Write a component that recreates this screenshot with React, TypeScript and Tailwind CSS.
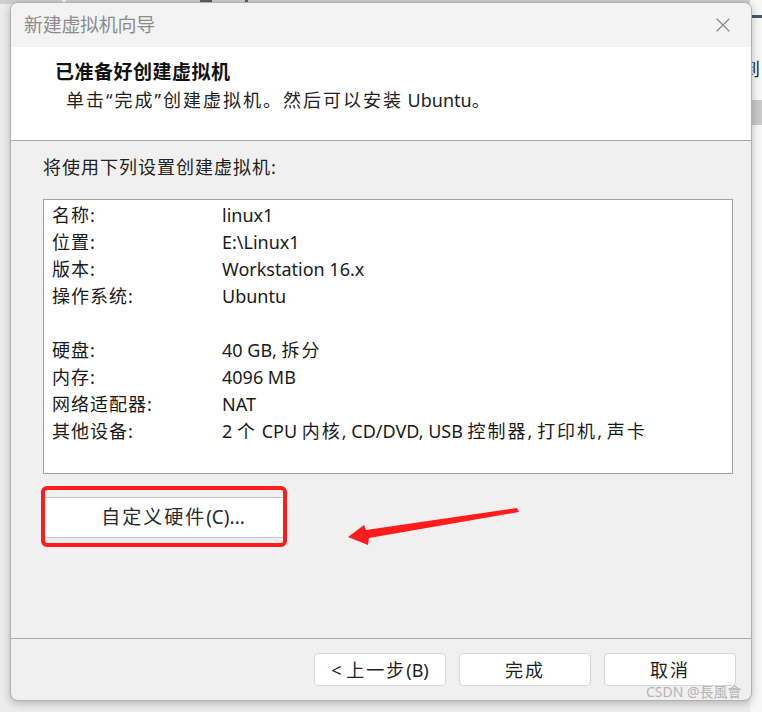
// New VM wizard — summary page before "finish"

import { X } from "lucide-react";

const rows: [string, string][] = [
  ["名称:", "linux1"],
  ["位置:", "E:\\Linux1"],
  ["版本:", "Workstation 16.x"],
  ["操作系统:", "Ubuntu"],
  ["", ""],
  ["硬盘:", "40 GB, 拆分"],
  ["内存:", "4096 MB"],
  ["网络适配器:", "NAT"],
  ["其他设备:", "2 个 CPU 内核, CD/DVD, USB 控制器, 打印机, 声卡"],
];

const font = "font-['Noto_Sans','Noto_Sans_CJK_SC',sans-serif]";

function T({ text, wide = false }: { text: string; wide?: boolean }) {
  const parts = text.split(/([\u3000-\u9fff\uff00-\uffef“”]+)/);
  return (
    <>
      {parts.map((p, i) =>
        i % 2 === 1 ? (
          <span key={i} className={wide ? "tracking-[2px]" : "tracking-[1px]"}>
            {p}
          </span>
        ) : (
          <span key={i}>{p}</span>
        )
      )}
    </>
  );
}

function FooterButton({ label }: { label: string }) {
  return (
    <button
      type="button"
      className="w-[132px] h-[33px] bg-white border border-[#d6d6d6] rounded-[4px] text-[18px] text-[#1e1e1e] leading-none"
    >
      <T text={label} wide />
    </button>
  );
}

export default function App() {
  return (
    <div className={`relative w-[762px] h-[712px] overflow-hidden bg-[#ececec] ${font}`}>
      {/* bits of the window behind */}
      <div className="absolute top-0 left-0 w-full h-[4px] bg-[#cfcfcf]" />
      <div className="absolute top-0 left-[62px] w-[4px] h-[3px] bg-[#f4f4f4]" />
      <div className="absolute top-0 left-[200px] w-[12px] h-[3px] bg-[#58606a]" />
      <div className="absolute top-0 left-[245px] w-[3px] h-[3px] bg-[#58606a]" />
      <div className="absolute top-0 left-[750px] w-[12px] h-[712px] bg-[#f7f7f7]" />
      <div className="absolute top-[15px] left-[750px] w-[12px] h-[3px] bg-[#4b5866]" />
      <div className="absolute top-[100px] left-[752px] w-[10px] h-[25px] bg-[#c9c9c9]" />
      <div className="absolute top-[60px] left-[742px] text-[18px] leading-none text-[#222]">到</div>

      <div className="relative ml-[10px] mt-[2px] w-[742px] h-[699px] flex flex-col rounded-[8px] border border-[#b0b0b0] bg-[#f0f0f0] shadow-[0_2px_8px_rgba(0,0,0,0.25)] overflow-hidden">
        {/* title bar */}
        <div className="h-[44px] shrink-0 flex items-center justify-between bg-[#f3f3f3] pl-[13px] pr-[16px]">
          <span className="text-[19px] text-[#8c8c8c] tracking-[-0.3px]">新建虚拟机向导</span>
          <X size={24} strokeWidth={1.2} className="text-[#8a8a8a]" />
        </div>

        {/* header */}
        <div className="h-[94px] shrink-0 bg-white border-b border-[#a8a8a8] pl-[44px] pt-[12px]">
          <div className="text-[19px] font-bold text-[#111] leading-[27px] tracking-[0.5px]">已准备好创建虚拟机</div>
          <div className="pl-[11px] pt-[1px] text-[18px] text-[#222] leading-[27px]">
            <T text="单击“完成”创建虚拟机。然后可以安装 Ubuntu。" wide />
          </div>
        </div>

        {/* body */}
        <div className="flex-1 flex flex-col pl-[32px] pr-[18px]">
          <div className="pt-[13px] text-[18px] text-[#222] leading-[26px]">
            <T text="将使用下列设置创建虚拟机:" />
          </div>
          <div className="mt-[19px] h-[275px] bg-white border border-[#9ea3ab] pl-[8px] pt-[2px]">
            {rows.map(([k, v], i) => (
              <div key={i} className="flex h-[27px] items-center text-[18px] text-[#1a1a1a] whitespace-nowrap">
                <span className="w-[170px] shrink-0">
                  <T text={k} />
                </span>
                <span>
                  <T text={v} wide />
                </span>
              </div>
            ))}
          </div>

          <div className="mt-[12px] ml-[-2px] w-[246px] h-[61px] border-4 border-[#ff1c1c] rounded-[6px] bg-[#f0f0f0] pt-[7px]">
            <button
              type="button"
              className="w-full h-[41px] bg-white border-y border-[#c4c4c4] text-[19px] text-[#2a2a2a] pl-[18px]"
            >
              <T text="自定义硬件(C)..." wide />
            </button>
          </div>
        </div>

        {/* footer */}
        <div className="h-[62px] shrink-0 border-t border-[#ababab] flex items-start justify-end gap-[13px] pt-[14px] pr-[15px]">
          <FooterButton label="< 上一步(B)" />
          <FooterButton label="完成" />
          <FooterButton label="取消" />
        </div>
      </div>

      {/* annotation arrow */}
      <svg className="absolute left-0 top-0" width="762" height="712" viewBox="0 0 762 712">
        <polygon
          points="348,537 364,525 366,530 517,508 519,512 369,538 368,545"
          fill="#ff1c1c"
        />
      </svg>

      <div className="absolute left-[646px] top-[685px] text-[14px] text-[#b4b4b4] leading-none">
        CSDN @長風會
      </div>
    </div>
  );
}
